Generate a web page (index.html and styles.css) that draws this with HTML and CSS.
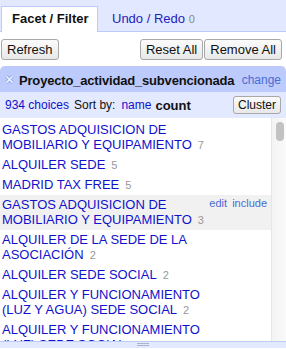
FILE: index.html
```html
<!DOCTYPE html>
<html>
<head>
<title>Facet / Filter</title>
<link rel="stylesheet" href="styles.css">
</head>
<body>
  <div class="panel">
    <div class="tabs">
      <div class="tab active">Facet / Filter</div>
      <div class="tab"><a href="#">Undo / Redo</a> <span class="tab-count">0</span></div>
    </div>

    <div class="tab-body">
      <div class="toolbar">
        <button class="btn">Refresh</button>
        <div class="spacer"></div>
        <button class="btn">Reset All</button>
        <button class="btn">Remove All</button>
      </div>

      <div class="facet">
        <div class="facet-title">
          <a href="#" class="change">change</a>
          <svg class="remove" width="9" height="9" viewBox="0 0 9 9">
            <path d="M1.5 1.5 L7.5 7.5 M7.5 1.5 L1.5 7.5" stroke="#8fa8ee" stroke-width="3.2" />
            <path d="M1.5 1.5 L7.5 7.5 M7.5 1.5 L1.5 7.5" stroke="#f2f5ff" stroke-width="1.6" />
          </svg><span class="facet-name">Proyecto_actividad_subvencionada</span>
        </div>

        <div class="facet-controls">
          <a href="#">934 choices</a>
          <span class="sort-by">Sort by:</span>
          <a href="#" class="sort-name">name</a>
          <b class="sort-count">count</b>
          <div class="spacer"></div>
          <button class="btn small">Cluster</button>
        </div>

        <div class="facet-body">
          <div class="choices">
            <div class="choice">
              <a href="#">GASTOS ADQUISICION DE MOBILIARIO Y EQUIPAMIENTO</a><span class="count">7</span>
            </div>
            <div class="choice">
              <a href="#">ALQUILER SEDE</a><span class="count">5</span>
            </div>
            <div class="choice">
              <a href="#">MADRID TAX FREE</a><span class="count">5</span>
            </div>
            <div class="choice hover">
              <a href="#">GASTOS ADQUISICION DE MOBILIARIO Y EQUIPAMIENTO</a><span class="count">3</span>
              <span class="choice-links"><a href="#">edit</a> <a href="#">include</a></span>
            </div>
            <div class="choice">
              <a href="#">ALQUILER DE LA SEDE DE LA ASOCIACIÓN</a><span class="count">2</span>
            </div>
            <div class="choice">
              <a href="#">ALQUILER SEDE SOCIAL</a><span class="count">2</span>
            </div>
            <div class="choice">
              <a href="#">ALQUILER Y FUNCIONAMIENTO (LUZ Y AGUA) SEDE SOCIAL</a><span class="count">2</span>
            </div>
            <div class="choice">
              <a href="#">ALQUILER Y FUNCIONAMIENTO (LUZ) SEDE SOCIAL</a><span class="count">2</span>
            </div>
          </div>
          <div class="scrollbar"><div class="thumb"></div></div>
        </div>
      </div>
    </div>

    <div class="resize"><div class="grip"></div></div>
  </div>
</body>
</html>
```

FILE: styles.css
```css
html, body { margin: 0; padding: 0; }

body
{
    background: white;
    font-family: "Liberation Sans", Arial, sans-serif;
    font-size: 13px;
    line-height: 15px;
    color: #111;
}

a { color: #11c; text-decoration: none; }

.panel
{
    width: 286px;
    height: 349px;
    overflow: hidden;
}

/* tabs */

.tabs
{
    display: flex;
    align-items: flex-end;
    height: 31px;
    background: #e1e8ff;
    border-bottom: 1px solid #bccbf9;
}

.tab
{
    box-sizing: border-box;
    height: 25px;
    padding: 5px 0 0 14px;
}

.tab.active
{
    width: 97px;
    height: 26px;
    margin-left: 1px;
    margin-bottom: -1px;
    padding: 4px 0 0 10px;
    background: white;
    border: 1px solid #bccbf9;
    border-bottom: none;
    font-weight: bold;
}

.tab a { color: #22b; }

.tab-count { color: #888; font-size: 11px; }

/* buttons */

.btn
{
    box-sizing: border-box;
    height: 21px;
    margin: 0;
    padding: 0 5px;
    font-family: inherit;
    font-size: 13px;
    color: #111;
    background: linear-gradient(#fbfbfb, #e8e8e8);
    border: 1px solid #a8a8a8;
    border-radius: 3px;
}

.btn.small
{
    height: 18px;
    padding: 0 4px;
    font-size: 12px;
}

.spacer { flex: 1; }

.toolbar
{
    display: flex;
    gap: 1px;
    padding: 7px 4px 0 1px;
}

/* facet */

.facet { margin-top: 6px; }

.facet-title
{
    height: 26px;
    box-sizing: border-box;
    padding: 7px 5px 0 5px;
    background: #bccbfb;
    border-radius: 5px 5px 0 0;
    font-weight: bold;
    white-space: nowrap;
}

.facet-name { letter-spacing: -0.18px; }

.remove
{
    margin-right: 5px;
    vertical-align: 1px;
}

.change
{
    float: right;
    font-weight: normal;
    font-size: 12px;
    color: #4a6bd6;
}

.facet-controls
{
    display: flex;
    align-items: center;
    height: 26px;
    padding: 0 5px;
    font-size: 12px;
    background: #e3e9ff;
}

.sort-by { margin-left: 5px; }
.sort-name { margin-left: 6px; }
.sort-count { margin-left: 4px; font-size: 13px; }

.facet-body
{
    display: flex;
    height: 223px;
}

.choices
{
    flex: 1;
    padding-top: 2px;
    overflow: hidden;
}

.choice
{
    position: relative;
    padding: 2px 40px 2px 2px;
}

.choice.hover { background: #f1f1f1; }

.count
{
    margin-left: 6px;
    font-size: 11px;
    color: #999;
}

.choice-links
{
    position: absolute;
    top: 1px;
    right: 4px;
    font-size: 11px;
}

.choice-links a { color: #4a6bd6; margin-left: 2px; }

.scrollbar
{
    width: 14px;
    border-left: 1px solid #e6e6e6;
    background: linear-gradient(to right, #f3f3f3, #fafafa);
}

.thumb
{
    width: 8px;
    height: 19px;
    margin: 4px 0 0 4px;
    border-radius: 4px;
    background: #c2c2c2;
}

/* bottom resize strip */

.resize
{
    height: 6px;
    background: #e3e9ff;
    border-top: 1px solid #bccbf9;
    display: flex;
    justify-content: center;
}

.grip
{
    width: 12px;
    height: 1px;
    margin-top: 1px;
    border-top: 1px solid #a9b3cc;
    border-bottom: 1px solid #a9b3cc;
}
```
